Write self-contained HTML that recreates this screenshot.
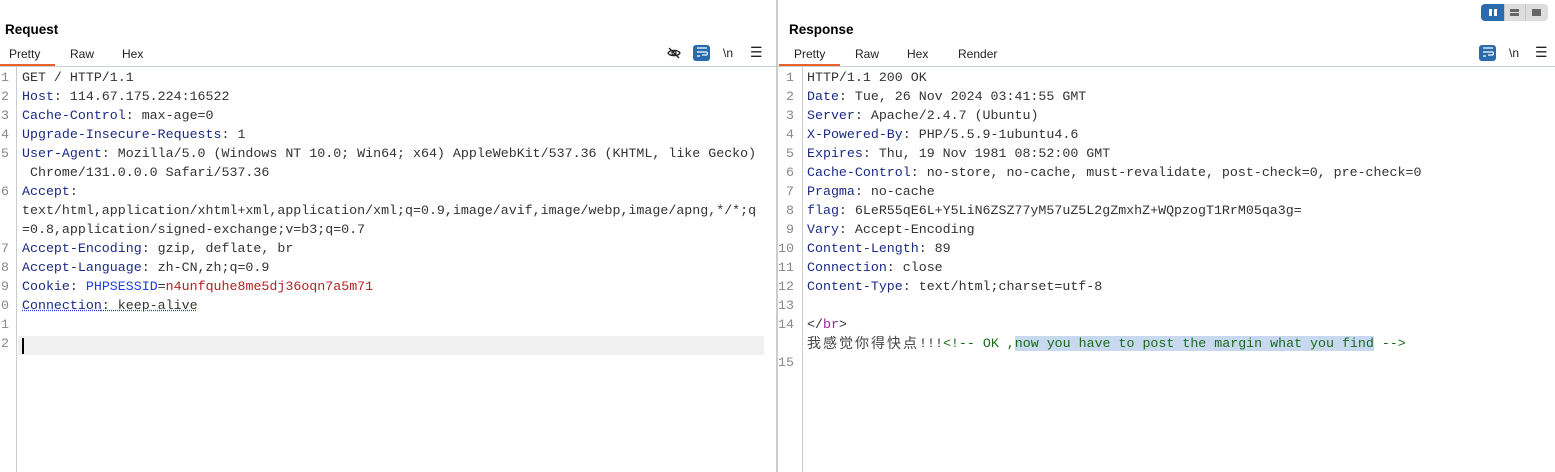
<!DOCTYPE html>
<html><head><meta charset="utf-8"><style>
*{margin:0;padding:0;box-sizing:border-box}
body{width:1555px;height:472px;background:#fff;position:relative;overflow:hidden;font-family:"Liberation Sans",sans-serif;color:#000}
.title{position:absolute;top:22px;font-weight:bold;font-size:13.5px}
.tabs{position:absolute;top:47px;font-size:12px;color:#222}
.tabs span{position:absolute;white-space:nowrap}
.hl{position:absolute;top:66px;height:1px;background:#c8cfd0}
.ul{position:absolute;top:64px;height:2px;background:#e8602c}
.gut{position:absolute;top:67px;bottom:0;width:1px;background:#ccc}
.code{position:absolute;top:68px;font-family:"Liberation Mono","Noto Sans CJK SC",monospace;font-size:13.3px;line-height:19px;white-space:pre;color:#333}
.num{position:absolute;top:68px;font-family:"Liberation Mono",monospace;font-size:13.3px;line-height:19px;white-space:pre;color:#888;overflow:hidden}
.k{color:#1c2a85}
.b{color:#1f3de0}
.r{color:#b22222}
.g{color:#1a6b1a}
.m{color:#a020a0}
.sel{background:#c8d8ee}
.ico{position:absolute;top:46px}
.vdiv{position:absolute;left:776px;top:0;bottom:0;width:2px;background:#ccc}
.cjk{font-family:"Noto Sans CJK SC",sans-serif;font-size:14px;letter-spacing:2px;color:#444}
</style></head><body>
<div class="vdiv"></div>
<div class="title" style="left:5px">Request</div>
<div class="title" style="left:789px">Response</div>
<div class="tabs" style="left:0"><span style="left:9px">Pretty</span><span style="left:70px">Raw</span><span style="left:122px">Hex</span></div>
<div class="tabs" style="left:778px"><span style="left:16px">Pretty</span><span style="left:77px">Raw</span><span style="left:129px">Hex</span><span style="left:180px">Render</span></div>
<div class="hl" style="left:0;width:776px"></div>
<div class="hl" style="left:778px;width:777px"></div>
<div class="ul" style="left:0;width:55px"></div>
<div class="ul" style="left:779px;width:61px"></div>
<svg class="ico" style="left:667px" width="14" height="14" viewBox="0 0 14 14"><path d="M1 7c2-3.5 10-3.5 12 0c-2 3.5-10 3.5-12 0z" fill="none" stroke="#222" stroke-width="1.3"/><circle cx="7" cy="7" r="2" fill="none" stroke="#222" stroke-width="1.2"/><path d="M2 2l10 10" stroke="#222" stroke-width="1.3"/></svg>
<div style="position:absolute;left:693px;top:45px;width:17px;height:16px;background:#2a6bb0;border-radius:3px"></div>
<svg class="ico" style="left:696px" width="12" height="12" viewBox="0 0 12 12"><path d="M1 2h10M1 6h9a1.5 1.5 0 010 3H6M1 10h3" fill="none" stroke="#fff" stroke-width="1.2"/></svg>
<div style="position:absolute;left:723px;top:46px;font-size:12px;color:#222">\n</div>
<div style="position:absolute;left:750px;top:44px;font-size:14px;color:#222">☰</div>
<div style="position:absolute;left:1479px;top:45px;width:17px;height:16px;background:#2a6bb0;border-radius:3px"></div>
<svg class="ico" style="left:1482px" width="12" height="12" viewBox="0 0 12 12"><path d="M1 2h10M1 6h9a1.5 1.5 0 010 3H6M1 10h3" fill="none" stroke="#fff" stroke-width="1.2"/></svg>
<div style="position:absolute;left:1509px;top:46px;font-size:12px;color:#222">\n</div>
<div style="position:absolute;left:1535px;top:44px;font-size:14px;color:#222">☰</div>
<div style="position:absolute;left:1481px;top:4px;width:67px;height:17px;background:#ddd;border-radius:4px;overflow:hidden">
<div style="position:absolute;left:0;top:0;width:23px;height:17px;background:#2a6bb0"></div>
<div style="position:absolute;left:8px;top:5px;width:3px;height:7px;background:#fff"></div>
<div style="position:absolute;left:13px;top:5px;width:3px;height:7px;background:#fff"></div>
<div style="position:absolute;left:23px;top:0;width:1px;height:17px;background:#c4c4c4"></div>
<div style="position:absolute;left:44px;top:0;width:1px;height:17px;background:#c4c4c4"></div>
<div style="position:absolute;left:29px;top:5px;width:9px;height:3px;background:#666"></div>
<div style="position:absolute;left:29px;top:9px;width:9px;height:3px;background:#666"></div>
<div style="position:absolute;left:51px;top:5px;width:9px;height:7px;background:#666"></div>
</div>
<div class="gut" style="left:16px"></div>
<div class="gut" style="left:802px"></div>
<div style="position:absolute;left:18px;top:336px;width:746px;height:19px;background:#f0f0f0"></div>
<div style="position:absolute;left:22px;top:338px;width:2px;height:16px;background:#000"></div>
<div class="num" style="left:1px;width:15px">1
2
3
4
5

6


7
8
9
0
1
2</div>
<div class="num" style="left:778px;width:24px;text-align:right;padding-right:8px">1
2
3
4
5
6
7
8
9
10
11
12
13
14

15</div>
<div class="code" style="left:22px">GET / HTTP/1.1
<span class="k">Host</span>: 114.67.175.224:16522
<span class="k">Cache-Control</span>: max-age=0
<span class="k">Upgrade-Insecure-Requests</span>: 1
<span class="k">User-Agent</span>: Mozilla/5.0 (Windows NT 10.0; Win64; x64) AppleWebKit/537.36 (KHTML, like Gecko)
 Chrome/131.0.0.0 Safari/537.36
<span class="k">Accept</span>:
text/html,application/xhtml+xml,application/xml;q=0.9,image/avif,image/webp,image/apng,*/*;q
=0.8,application/signed-exchange;v=b3;q=0.7
<span class="k">Accept-Encoding</span>: gzip, deflate, br
<span class="k">Accept-Language</span>: zh-CN,zh;q=0.9
<span class="k">Cookie</span>: <span class="b">PHPSESSID</span>=<span class="r">n4unfquhe8me5dj36oqn7a5m71</span>
<span style="text-decoration:underline dotted #1f3de0"><span class="k">Connection</span>: keep-alive</span></div>
<div class="code" style="left:807px">HTTP/1.1 200 OK
<span class="k">Date</span>: Tue, 26 Nov 2024 03:41:55 GMT
<span class="k">Server</span>: Apache/2.4.7 (Ubuntu)
<span class="k">X-Powered-By</span>: PHP/5.5.9-1ubuntu4.6
<span class="k">Expires</span>: Thu, 19 Nov 1981 08:52:00 GMT
<span class="k">Cache-Control</span>: no-store, no-cache, must-revalidate, post-check=0, pre-check=0
<span class="k">Pragma</span>: no-cache
<span class="k">flag</span>: 6LeR55qE6L+Y5LiN6ZSZ77yM57uZ5L2gZmxhZ+WQpzogT1RrM05qa3g=
<span class="k">Vary</span>: Accept-Encoding
<span class="k">Content-Length</span>: 89
<span class="k">Connection</span>: close
<span class="k">Content-Type</span>: text/html;charset=utf-8

&lt;/<span class="m">br</span>&gt;
<span class="cjk" style="display:inline-block;width:112px;line-height:19px;vertical-align:top">我感觉你得快点</span>!!!<span class="g">&lt;!-- OK ,<span class="sel">now you have to post the margin what you find</span> --&gt;</span></div>
</body></html>
